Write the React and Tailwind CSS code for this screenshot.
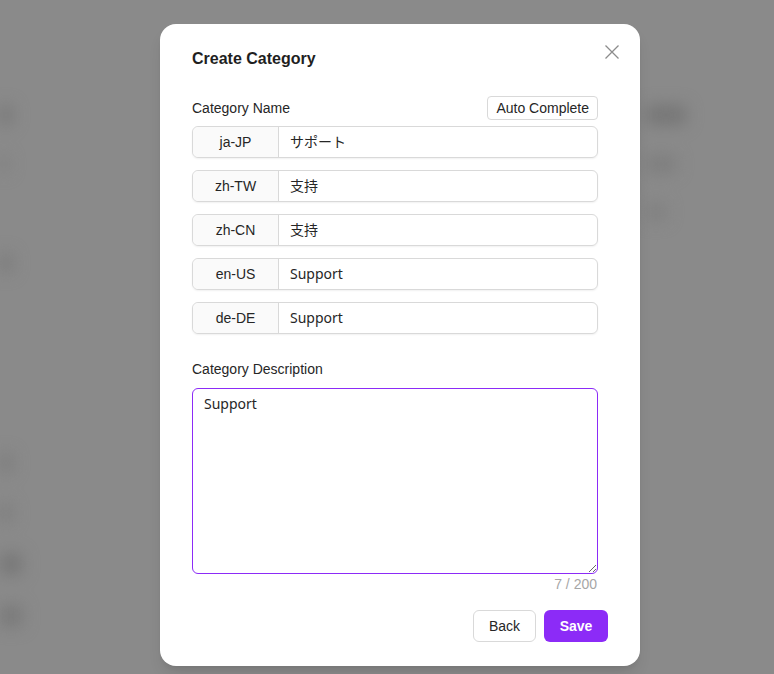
import { useState } from "react";

const locales = [
  { code: "ja-JP", value: "サポート" },
  { code: "zh-TW", value: "支持" },
  { code: "zh-CN", value: "支持" },
  { code: "en-US", value: "Support" },
  { code: "de-DE", value: "Support" },
];

const font = {
  fontFamily:
    '"Liberation Sans", Arial, "Noto Sans CJK JP", "Noto Sans CJK SC", sans-serif',
};
const inputFont = {
  fontFamily: '"Noto Sans", "Noto Sans CJK JP", "Noto Sans CJK TC", sans-serif',
};

const App = () => {
  const [names, setNames] = useState(locales.map((l) => l.value));
  const [desc, setDesc] = useState("Support");

  return (
    <div className="relative h-[674px] w-[774px] overflow-hidden bg-[#8a8a8a]" style={font}>
      {/* Blurred page behind the dialog */}
      <div className="flex h-full justify-between blur-[8px]">
        <div className="flex flex-col gap-[30px] pt-[105px]">
          <div className="h-[20px] w-[12px] rounded bg-[#767676]" />
          <div className="h-[18px] w-[8px] rounded bg-[#7e7e7e]" />
          <div className="mt-[50px] h-[20px] w-[12px] rounded bg-[#7a7a7a]" />
          <div className="mt-[150px] h-[20px] w-[12px] rounded bg-[#7b7b7b]" />
          <div className="h-[20px] w-[12px] rounded bg-[#7d7d7d]" />
          <div className="h-[22px] w-[22px] rounded bg-[#777]" />
          <div className="h-[22px] w-[22px] rounded bg-[#797979]" />
        </div>
        <div className="flex flex-col gap-[30px] pr-[88px] pt-[105px]">
          <div className="h-[20px] w-[40px] rounded bg-[#767676]" />
          <div className="h-[18px] w-[30px] rounded bg-[#7e7e7e]" />
          <div className="h-[18px] w-[20px] rounded bg-[#808080]" />
        </div>
      </div>

      {/* Dialog */}
      <div className="absolute inset-0 flex pl-[160px] pt-[24px]">
        <div className="relative flex h-[642px] w-[480px] flex-col rounded-2xl bg-white pl-8 pr-[42px] pt-[23px] shadow-lg">
          <button className="absolute right-[20px] top-[20px] text-[#8c8c8c]">
            <svg width="16" height="16" viewBox="0 0 16 16" fill="none" stroke="currentColor" strokeWidth="1.3">
              <path d="M1.5 1.5l13 13M14.5 1.5l-13 13" />
            </svg>
          </button>

          <h2 className="text-base font-bold leading-6 text-[#1f1f1f]">Create Category</h2>

          <div className="mt-[25px] flex items-center justify-between">
            <label className="text-sm text-[#262626]">Category Name</label>
            <button className="h-6 rounded border border-[#d9d9d9] px-2 text-sm text-[#262626]">
              Auto Complete
            </button>
          </div>

          <div className="mt-[6px] flex flex-col gap-3">
            {locales.map((l, i) => (
              <div
                key={l.code}
                className="flex h-8 rounded-md border border-[#d9d9d9] shadow-[0_1px_2px_rgba(0,0,0,0.06)]"
              >
                <span className="flex w-[86px] items-center justify-center rounded-l-md border-r border-[#d9d9d9] bg-[#fafafa] text-sm text-[#262626]">
                  {l.code}
                </span>
                <input
                  className="flex-1 rounded-r-md px-[11px] text-sm text-[#262626] outline-none"
                  style={inputFont}
                  value={names[i]}
                  onChange={(e) => {
                    const next = [...names];
                    next[i] = e.target.value;
                    setNames(next);
                  }}
                />
              </div>
            ))}
          </div>

          <label className="mt-[24px] text-sm leading-[22px] text-[#262626]">
            Category Description
          </label>
          <textarea
            className="mt-2 h-[186px] w-full resize-y rounded-md border border-[#8c2bf7] px-[11px] py-[5px] text-sm text-[#262626] outline-none"
            style={inputFont}
            value={desc}
            maxLength={200}
            onChange={(e) => setDesc(e.target.value)}
          />
          <div className="pr-[1px] text-right text-sm leading-5 text-[#a6a6a6]">
            {desc.length} / 200
          </div>

          <div className="-mr-[10px] mt-4 flex justify-end gap-2">
            <button className="h-8 w-[63px] rounded-md border border-[#d9d9d9] bg-white text-sm text-[#262626]">
              Back
            </button>
            <button className="h-8 w-[64px] rounded-md bg-[#8c2bf7] text-sm font-bold text-white">
              Save
            </button>
          </div>
        </div>
      </div>
    </div>
  );
};

export default App;
